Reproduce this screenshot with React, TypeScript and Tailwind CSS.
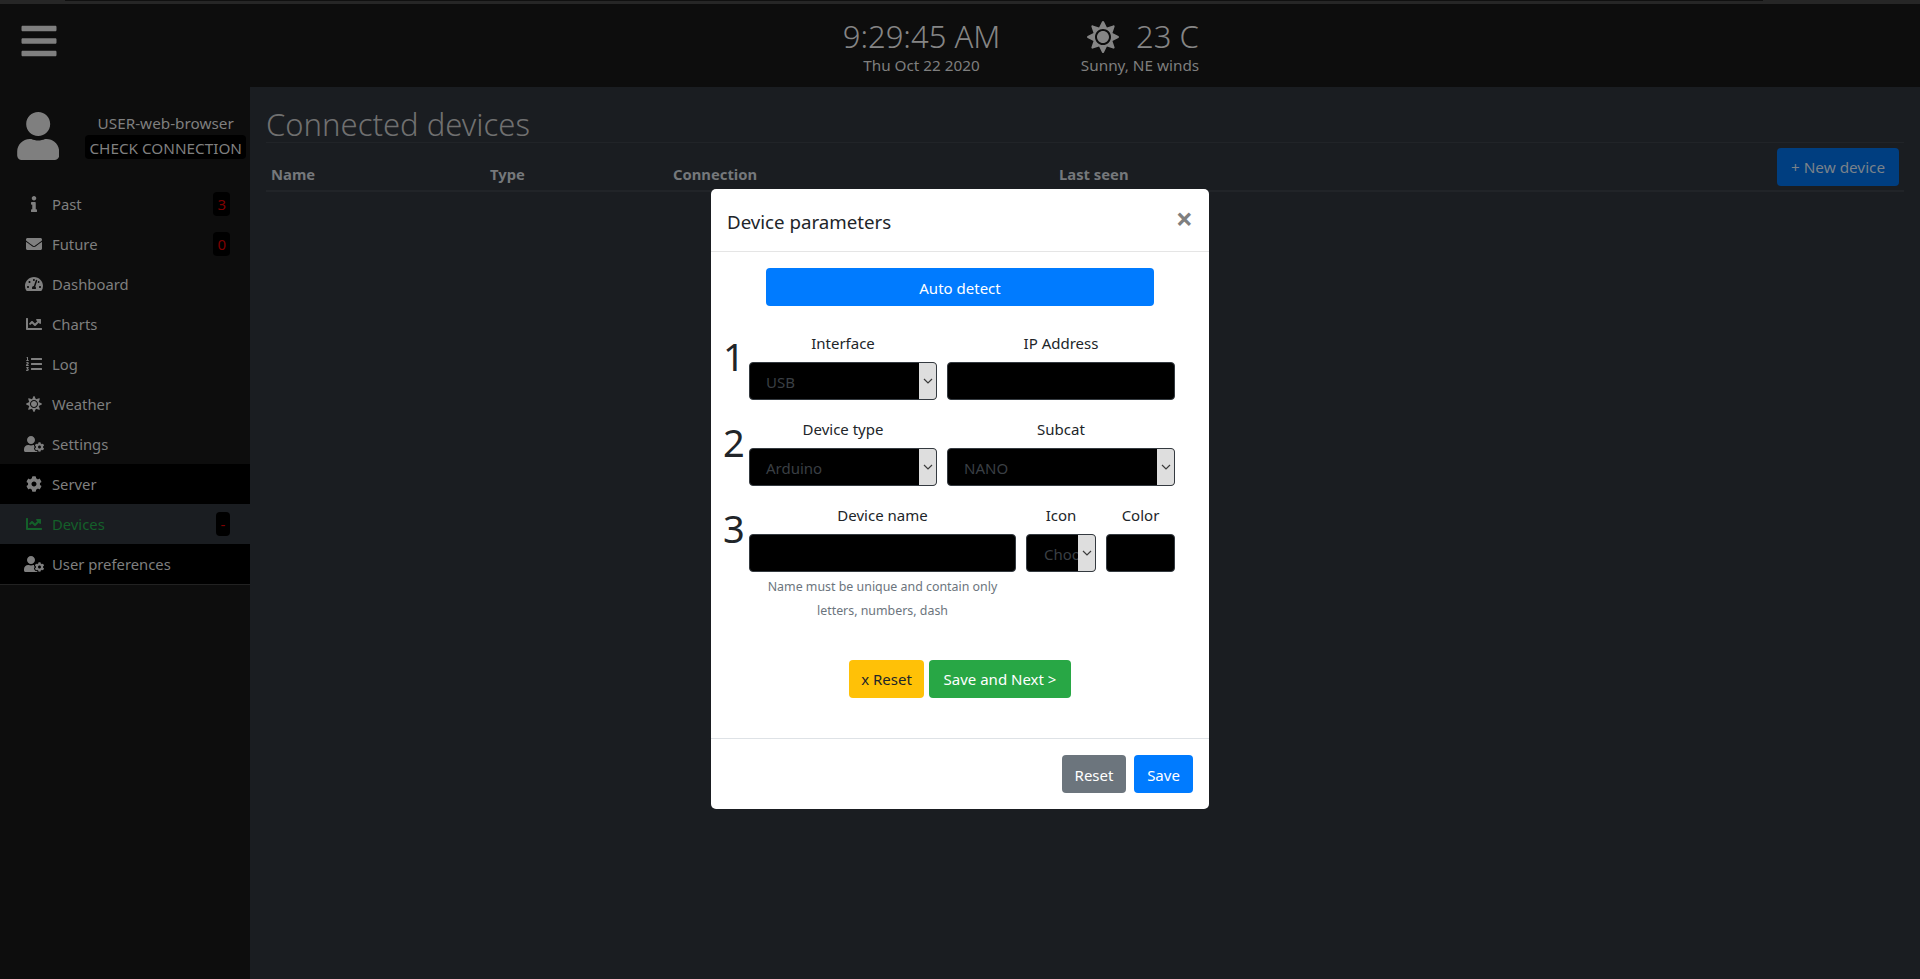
import { FaBars, FaUser, FaInfo, FaEnvelope, FaTachometerAlt, FaChartLine, FaListOl, FaSun, FaUserCog, FaCog } from "react-icons/fa";
import type { ReactNode } from "react";

const font = "font-['Noto_Sans','Open_Sans',sans-serif]";

function NavItem({ icon, label, tone = "plain", badge }: { icon: ReactNode; label: string; tone?: "plain" | "black" | "active"; badge?: string }) {
  const bg = tone === "black" ? "bg-black" : tone === "active" ? "bg-[#1a1d21]" : "";
  const color = tone === "active" ? "text-[#14602a]" : "text-[#7f7f7f]";
  return (
    <div className={`flex h-10 items-center pl-6 pr-5 ${bg} ${color}`}>
      <span className="flex w-[28px] justify-center pr-2">{icon}</span>
      <span className="flex-1 text-[14.8px] leading-6">{label}</span>
      {badge && (
        <span className="flex h-6 min-w-[14px] items-center justify-center rounded bg-black px-1 text-[15px] leading-none text-[#7f0000]">{badge}</span>
      )}
    </div>
  );
}

function Label({ children }: { children: ReactNode }) {
  return <div className="mb-[6px] mt-[-1px] h-[25px] text-center text-[15px] leading-6 text-[#212529]">{children}</div>;
}

function FakeSelect({ value, clip }: { value: string; clip?: boolean }) {
  return (
    <div className="relative flex h-[38px] items-center overflow-hidden rounded border border-[#343a40] bg-black pt-[2px]">
      <span className={`text-[15px] leading-6 text-[#3a3f44] ${clip ? "pl-[17px] whitespace-nowrap" : "pl-[16px]"}`}>{value}</span>
      <span className="absolute inset-y-0 right-0 flex w-[17px] items-center justify-center bg-[#dedede]">
        <svg width="10" height="6" viewBox="0 0 10 6" fill="none" stroke="#3c3c3c" strokeWidth="1.2"><path d="M1 1l4 4 4-4" /></svg>
      </span>
    </div>
  );
}

function FakeInput() {
  return <div className="h-[38px] rounded border border-[#343a40] bg-black" />;
}

function Btn({ className, children }: { className: string; children: ReactNode }) {
  return <div className={`flex h-[38px] items-center justify-center rounded text-[15px] leading-6 ${className}`}>{children}</div>;
}

export default function App() {
  return (
    <div className={`relative h-[979px] w-full overflow-hidden bg-[#1a1d21] ${font}`}>
      <div className="h-[4px] bg-[#262626]">
        <div className="mx-[65px] h-[1px] w-[1698px] bg-[#101010]" />
      </div>
      <header className="relative flex h-[83px] items-center bg-[#0d0d0d] text-[#7f7f7f]">
        <div className="absolute left-[19px] top-[17px] text-[40px] leading-none"><FaBars /></div>
        <div className="ml-[839px] flex w-[165px] flex-col items-center">
          <div className="text-[31px] font-light leading-[40px] text-[#858585]">9:29:45 AM</div>
          <div className="mt-[-1px] text-[15.3px] leading-5">Thu Oct 22 2020</div>
        </div>
        <div className="ml-[61px] flex w-[150px] flex-col items-center">
          <div className="ml-[6px] mt-[1px] flex items-center gap-[17px] text-[31px] font-light leading-[39px] text-[#858585]">
            <FaSun className="text-[32px]" />
            <span>23 C</span>
          </div>
          <div className="mt-[-1px] text-[15.3px] leading-5">Sunny, NE winds</div>
        </div>
      </header>
      <div className="flex h-[892px]">
        <aside className="w-[250px] shrink-0 bg-[#0d0d0d]">
          <div className="flex h-[97px] items-start pl-[17px] pr-1 pt-[25px] text-[#7f7f7f]">
            <FaUser className="text-[48px]" />
            <div className="ml-[26px] mt-[-1px] flex flex-col items-center">
              <div className="text-[15.3px] leading-6">USER-web-browser</div>
              <div className="h-6 rounded bg-black px-1 pt-[1px] text-[15.3px] leading-6 whitespace-nowrap">CHECK CONNECTION</div>
            </div>
          </div>
          <nav className="border-b border-[#222222]">
            <NavItem icon={<FaInfo size={16} />} label="Past" badge="3" />
            <NavItem icon={<FaEnvelope size={16} />} label="Future" badge="0" />
            <NavItem icon={<FaTachometerAlt size={18} />} label="Dashboard" />
            <NavItem icon={<FaChartLine size={16} />} label="Charts" />
            <NavItem icon={<FaListOl size={16} />} label="Log" />
            <NavItem icon={<FaSun size={16} />} label="Weather" />
            <NavItem icon={<FaUserCog size={20} />} label="Settings" />
            <NavItem icon={<FaCog size={16} />} label="Server" tone="black" />
            <NavItem icon={<FaChartLine size={16} />} label="Devices" tone="active" badge="-" />
            <NavItem icon={<FaUserCog size={20} />} label="User preferences" tone="black" />
          </nav>
        </aside>
        <main className="flex-1 pl-4 pr-4 pt-[16px]">
          <h1 className="h-[40px] border-b border-[#212428] text-[31px] font-light leading-[43px] text-[#707070]">Connected devices</h1>
          <div className="flex h-[49px] items-end border-b-2 border-[#212428]">
            <div className="grid flex-1 grid-cols-[219px_183px_386px_1fr] pb-[4px] pl-[5px] text-[14.8px] font-bold leading-6 text-[#75787b]">
              <span>Name</span><span>Type</span><span>Connection</span><span>Last seen</span>
            </div>
            <div className="mb-[4px] mr-[5px] flex h-[38px] w-[122px] items-center justify-center rounded bg-[#003e80] text-[15.3px] text-[#7a828a]">+ New device</div>
          </div>
        </main>
      </div>

      <div className="absolute left-[711px] top-[189px] h-[620px] w-[498px] rounded-[5px] bg-white text-[#212529]">
        <div className="flex h-[63px] items-start justify-between border-b border-[#e5e5e5] pl-4 pr-[16px] pt-[19px]">
          <div className="text-[18.7px] leading-[28px]">Device parameters</div>
          <div className="mt-[-3px] text-[30px] font-bold leading-[28px] text-[#7f7f7f]">×</div>
        </div>
        <div className="h-[486px] pt-[16px]">
          <Btn className="mx-[55px] bg-[#007bff] pt-[2px] text-white">Auto detect</Btn>
          <div className="mt-[26px] flex pl-[12px]">
            <div className="mt-[-1px] w-[26px] text-[38px] leading-[50px] text-[#212529]">1</div>
            <div className="grid w-[426px] grid-cols-[188px_228px] gap-x-[10px]">
              <div><Label>Interface</Label><FakeSelect value="USB" /></div>
              <div><Label>IP Address</Label><FakeInput /></div>
            </div>
          </div>
          <div className="mt-[18px] flex pl-[12px]">
            <div className="mt-[-1px] w-[26px] text-[38px] leading-[50px] text-[#212529]">2</div>
            <div className="grid w-[426px] grid-cols-[188px_228px] gap-x-[10px]">
              <div><Label>Device type</Label><FakeSelect value="Arduino" /></div>
              <div><Label>Subcat</Label><FakeSelect value="NANO" /></div>
            </div>
          </div>
          <div className="mt-[18px] flex pl-[12px]">
            <div className="mt-[-1px] w-[26px] text-[38px] leading-[50px] text-[#212529]">3</div>
            <div className="grid w-[426px] grid-cols-[267px_70px_69px] gap-x-[10px]">
              <div>
                <Label>Device name</Label>
                <FakeInput />
                <div className="mb-[-1px] mt-[3px] px-3 text-center text-[12.4px] leading-6 text-[#6c757d]">Name must be unique and contain only letters, numbers, dash</div>
              </div>
              <div><Label>Icon</Label><FakeSelect value="Choose" clip /></div>
              <div><Label>Color</Label><FakeInput /></div>
            </div>
          </div>
          <div className="mt-[38px] flex justify-center gap-[5px]">
            <Btn className="w-[75px] bg-[#ffc107] text-[#212529]">x Reset</Btn>
            <Btn className="w-[142px] bg-[#28a745] text-white">Save and Next &gt;</Btn>
          </div>
        </div>
        <div className="flex justify-end gap-2 border-t border-[#dee2e6] pr-4 pt-4">
          <Btn className="w-[64px] bg-[#6c757d] pt-[2px] text-white">Reset</Btn>
          <Btn className="w-[59px] bg-[#007bff] pt-[2px] text-white">Save</Btn>
        </div>
      </div>
    </div>
  );
}
